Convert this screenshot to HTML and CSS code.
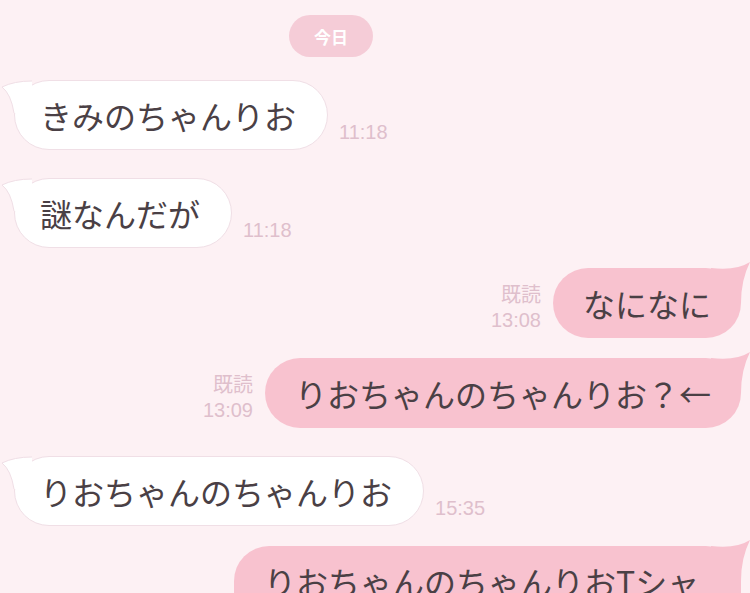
FILE: index.html
```html
<!DOCTYPE html>
<html lang="ja">
<head>
    <meta charset="UTF-8">
    <meta name="viewport" content="width=device-width, initial-scale=1.0">
    <title>トーク</title>
    <link rel="stylesheet" href="styles.css">
</head>
<body>

<div class="talk">
    <div class="date-row">
        <span class="date-pill">今日</span>
    </div>

    <div class="row in first">
        <div class="bubble">
            <svg class="tail" viewBox="0 0 40 44" width="40" height="44"><path d="M32 8 Q14 8 2 14 Q11 21 14 40 L32 40 Z" fill="#fff"/><path d="M32 8 Q14 8 2 14 Q11 21 14 40" fill="none" stroke="#f0dfe6"/></svg>
            きみのちゃんりお
        </div>
        <span class="time">11:18</span>
    </div>

    <div class="row in">
        <div class="bubble">
            <svg class="tail" viewBox="0 0 40 44" width="40" height="44"><path d="M32 8 Q14 8 2 14 Q11 21 14 40 L32 40 Z" fill="#fff"/><path d="M32 8 Q14 8 2 14 Q11 21 14 40" fill="none" stroke="#f0dfe6"/></svg>
            謎なんだが
        </div>
        <span class="time">11:18</span>
    </div>

    <div class="row out">
        <div class="meta">
            <span>既読</span>
            <span>13:08</span>
        </div>
        <div class="bubble">
            <svg class="tail" viewBox="0 0 44 44" width="44" height="44"><path d="M2 8 Q27 11 41 2 Q32 20 32 43 L2 43 Z" fill="#f8c2cf"/></svg>
            なになに
        </div>
    </div>

    <div class="row out">
        <div class="meta">
            <span>既読</span>
            <span>13:09</span>
        </div>
        <div class="bubble">
            <svg class="tail" viewBox="0 0 44 44" width="44" height="44"><path d="M2 8 Q27 11 41 2 Q32 20 32 43 L2 43 Z" fill="#f8c2cf"/></svg>
            りおちゃんのちゃんりお？←
        </div>
    </div>

    <div class="row in">
        <div class="bubble">
            <svg class="tail" viewBox="0 0 40 44" width="40" height="44"><path d="M32 8 Q14 8 2 14 Q11 21 14 40 L32 40 Z" fill="#fff"/><path d="M32 8 Q14 8 2 14 Q11 21 14 40" fill="none" stroke="#f0dfe6"/></svg>
            りおちゃんのちゃんりお
        </div>
        <span class="time">15:35</span>
    </div>

    <div class="row out">
        <div class="bubble">
            <svg class="tail" viewBox="0 0 44 44" width="44" height="44"><path d="M2 8 Q27 11 41 2 Q32 20 32 43 L2 43 Z" fill="#f8c2cf"/></svg>
            りおちゃんのちゃんりおTシャツ
        </div>
    </div>
</div>

</body>
</html>
```

FILE: styles.css
```css
* {
    margin: 0;
    padding: 0;
    box-sizing: border-box;
}

html, body {
    height: 100%;
    overflow: hidden;
    background-color: #fdf1f4;
    font-family: "Noto Sans CJK JP", "Noto Sans", sans-serif;
}

.talk {
    display: flex;
    flex-direction: column;
    padding: 15px 9px 0 14px;
}

.date-row {
    display: flex;
    padding-left: 275px;
}

.date-pill {
    display: inline-flex;
    align-items: center;
    justify-content: center;
    width: 84px;
    height: 42px;
    border-radius: 21px;
    background-color: #f5ccd7;
    color: #fff;
    font-size: 17px;
    font-weight: bold;
}

.row {
    display: flex;
    align-items: flex-end;
    margin-top: 20px;
}

.row.in { margin-top: 28px; }
.row.first { margin-top: 23px; }

.row.out {
    justify-content: flex-end;
}

.bubble {
    position: relative;
    max-width: 507px;
    padding: 15px 30px;
    border-radius: 35px;
    font-size: 32px;
    line-height: 40px;
    color: #4a4045;
}

.row.in .bubble {
    background-color: #fff;
    border: 1px solid #f0dfe6;
    padding: 14px 31px 14px 25px;
}

.row.out .bubble {
    background-color: #f8c2cf;
}

.tail {
    position: absolute;
    top: -8px;
}

.row.in .tail { left: -15px; }
.row.out .tail { right: -12px; }

.time,
.meta {
    font-family: "Liberation Sans", "Noto Sans CJK JP", sans-serif;
    font-size: 20px;
    line-height: 25px;
    color: #dfbfcc;
    margin-bottom: 5px;
}

.time {
    margin-left: 11px;
}

.meta {
    display: flex;
    flex-direction: column;
    align-items: flex-end;
    margin-right: 12px;
}
```
